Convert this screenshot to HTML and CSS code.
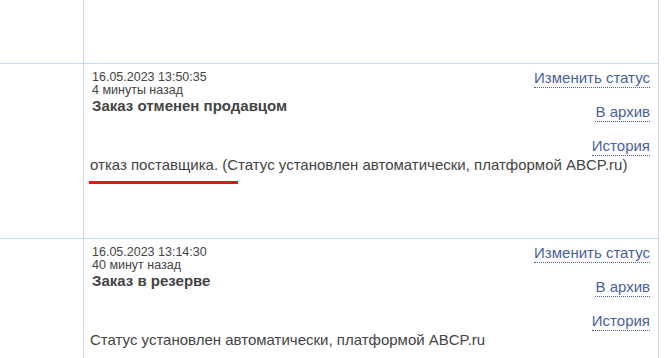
FILE: index.html
```html
<!DOCTYPE html>
<html lang="ru">
<head>
<meta charset="utf-8">
<link rel="stylesheet" href="styles.css">
</head>
<body>
<div class="table">
  <div class="row row-top">
    <div class="cell-left"></div>
    <div class="cell-main"></div>
  </div>
  <div class="row row-mid">
    <div class="cell-left"></div>
    <div class="cell-main">
      <div class="actions">
        <a class="act" href="#">Изменить статус</a>
        <a class="act" href="#">В архив</a>
        <a class="act" href="#">История</a>
      </div>
      <div class="date">16.05.2023 13:50:35</div>
      <div class="ago">4 минуты назад</div>
      <div class="status">Заказ отменен продавцом</div>
      <div class="comment">отказ поставщика. (Статус установлен автоматически, платформой ABCP.ru)</div>
      <div class="mark"></div>
    </div>
  </div>
  <div class="row row-bot">
    <div class="cell-left"></div>
    <div class="cell-main">
      <div class="actions">
        <a class="act" href="#">Изменить статус</a>
        <a class="act" href="#">В архив</a>
        <a class="act" href="#">История</a>
      </div>
      <div class="date">16.05.2023 13:14:30</div>
      <div class="ago">40 минут назад</div>
      <div class="status">Заказ в резерве</div>
      <div class="comment">Статус установлен автоматически, платформой ABCP.ru</div>
    </div>
  </div>
</div>
</body>
</html>
```
FILE: styles.css
```css
html, body {
  margin: 0;
  padding: 0;
  background: #fff;
}
body {
  font-family: "Liberation Sans", Arial, sans-serif;
  color: #444;
  overflow: hidden;
}
.table {
  width: 659px;
  border-right: 1px solid #c8d6ee;
  box-sizing: border-box;
}
.row {
  display: flex;
  border-bottom: 1px solid #c8d6ee;
}
.row-top { height: 63px; }
.row-mid { height: 174px; }
.row-bot { height: 120px; border-bottom: none; }
.cell-left {
  width: 83px;
  flex: none;
  border-right: 1px solid #c8d6ee;
}
.cell-main {
  flex: 1;
  padding: 6px 8px 0 6px;
  min-width: 0;
  overflow: hidden;
}
.actions {
  float: right;
  display: flex;
  flex-direction: column;
  align-items: flex-end;
  gap: 16px;
}
.act {
  font-size: 15px;
  line-height: 15px;
  color: #4b5f9e;
  text-decoration: none;
  border-bottom: 1px dotted #4b5f9e;
  padding-bottom: 2px;
}
.date, .ago {
  font-size: 12.5px;
  line-height: 13px;
  padding-left: 2px;
}
.date { margin-top: 1px; }
.status {
  font-size: 15px;
  font-weight: bold;
  line-height: 17px;
  padding-left: 2px;
}
.comment {
  clear: both;
  font-size: 15px;
  line-height: 17px;
}
.mark {
  width: 149px;
  height: 3px;
  background: #f01010;
  margin-top: 8px;
  margin-left: -1px;
}
```
